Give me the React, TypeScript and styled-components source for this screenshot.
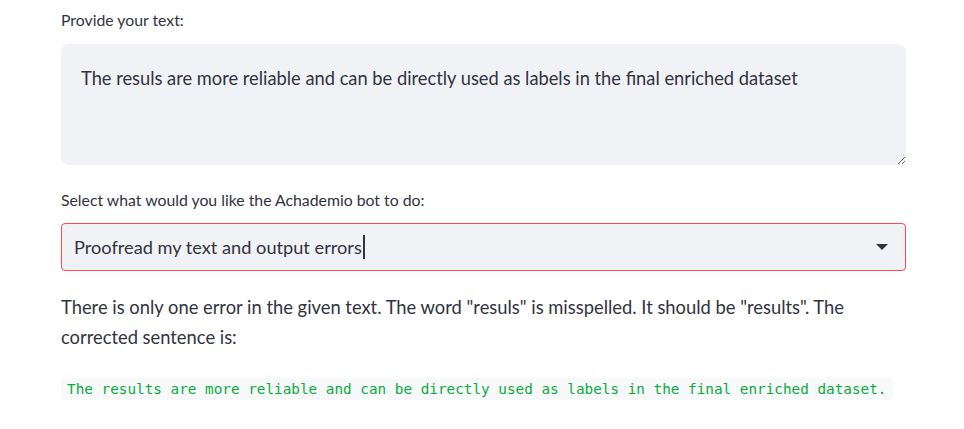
import React from "react";
import styled, { createGlobalStyle } from "styled-components";

const Global = createGlobalStyle`
  html, body { margin: 0; padding: 0; background: #ffffff; }
  body { font-family: Lato, "Open Sans", sans-serif; color: #31333f; }
`;

const Page = styled.main`
  width: 845px;
  padding: 10px 0 0 61px;
  display: flex;
  flex-direction: column;
`;

const Label = styled.label<{ $gap?: number }>`
  font-size: 15.8px;
  line-height: 20px;
  color: #31333f;
  height: 20px;
  display: block;
  margin-bottom: ${(p) => p.$gap ?? 14}px;
`;

const Field = styled.div<{ $after: number }>`
  display: flex;
  flex-direction: column;
  margin-bottom: ${(p) => p.$after}px;
`;

const TextArea = styled.textarea`
  box-sizing: border-box;
  width: 845px;
  height: 121px;
  border: none;
  border-radius: 8px;
  background: #f0f2f6;
  padding: 22px 20px;
  font-family: Lato, "Open Sans", sans-serif;
  font-size: 18.3px;
  line-height: 24px;
  color: #31333f;
  resize: vertical;
  outline: none;
`;

const Select = styled.div`
  box-sizing: border-box;
  width: 845px;
  height: 48px;
  border: 1px solid #ff4b4b;
  border-radius: 4px;
  background: #f0f2f6;
  display: flex;
  align-items: center;
  justify-content: space-between;
  padding: 0 17px 0 12px;
  font-size: 18.2px;
  color: #31333f;
`;

const Value = styled.span`
  display: flex;
  align-items: center;
`;

const Caret = styled.span`
  display: inline-block;
  width: 2px;
  height: 24px;
  background: #31333f;
  margin-left: 1px;
`;

const Arrow = styled.span`
  width: 0;
  height: 0;
  border-left: 6px solid transparent;
  border-right: 6px solid transparent;
  border-top: 6px solid #31333f;
`;

const Paragraph = styled.p`
  margin: 0 0 26px;
  font-size: 18.35px;
  line-height: 30px;
  color: #31333f;
`;

const Code = styled.code`
  align-self: flex-start;
  background: #f8f9fb;
  border-radius: 4px;
  padding: 2px 6px;
  font-family: "DejaVu Sans Mono", "Liberation Mono", monospace;
  font-size: 14.33px;
  line-height: 18px;
  color: #09ab3b;
  white-space: pre;
`;

export default function App() {
  return (
    <>
      <Global />
      <Page>
        <Field $after={25}>
          <Label>Provide your text:</Label>
          <TextArea
            readOnly
            defaultValue="The resuls are more reliable and can be directly used as labels in the final enriched dataset"
          />
        </Field>
        <Field $after={21}>
          <Label $gap={13}>Select what would you like the Achademio bot to do:</Label>
          <Select>
            <Value>
              Proofread my text and output errors
              <Caret />
            </Value>
            <Arrow />
          </Select>
        </Field>
        <Paragraph>
          There is only one error in the given text. The word "resuls" is misspelled. It should be "results". The
          corrected sentence is:
        </Paragraph>
        <Code>The results are more reliable and can be directly used as labels in the final enriched dataset.</Code>
      </Page>
    </>
  );
}
